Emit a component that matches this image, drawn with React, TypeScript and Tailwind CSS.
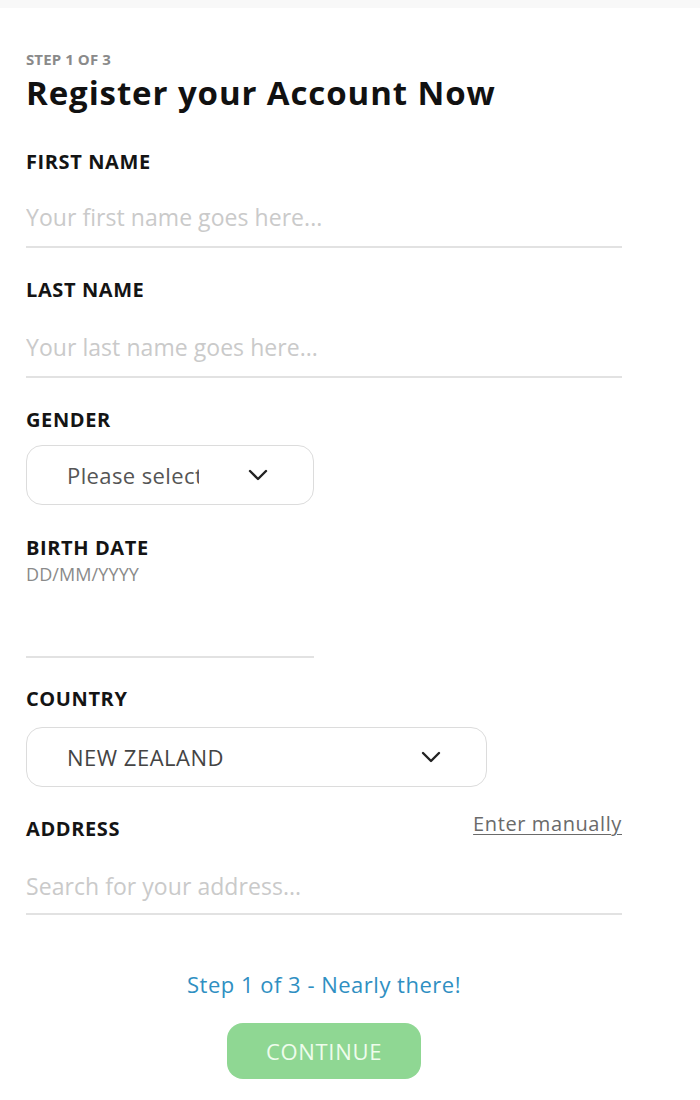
import React from "react";

const font = { fontFamily: '"Open Sans", "Noto Sans", sans-serif' };

function Chevron() {
  return (
    <svg width="20" height="12" viewBox="0 0 20 12" fill="none" className="shrink-0">
      <polyline points="2,2 10,10 18,2" stroke="#222" strokeWidth="2.4" strokeLinecap="round" strokeLinejoin="round" />
    </svg>
  );
}

function Label({ children }: { children: React.ReactNode }) {
  return <div className="text-[20px] leading-[28px] font-bold text-[#141414] tracking-[0.6px]">{children}</div>;
}

function TextInput({ placeholder, pb = "pb-[14px]" }: { placeholder: string; pb?: string }) {
  return (
    <div className={`mt-[28px] ${pb} border-b-2 border-[#e2e2e2]`}>
      <input
        className="block w-full h-[30px] text-[23px] leading-[30px] outline-none bg-transparent placeholder:text-[#cacaca] text-[#333] tracking-[0.05px]"
        placeholder={placeholder}
        style={font}
      />
    </div>
  );
}

export default function App() {
  return (
    <div className="w-[700px] min-h-[1100px] bg-white" style={font}>
      <div className="h-[8px] bg-[#f8f8f8]" />
      <div className="ml-[26px] w-[596px] pt-[41px] pb-[21px]">
        <div className="text-[15px] leading-[20px] font-bold text-[#8a8a8a] tracking-[0.1px]">STEP 1 OF 3</div>
        <h1 className="mt-[4px] text-[33px] leading-[40px] font-bold text-[#111] tracking-[0.9px]">Register your Account Now</h1>

        <div className="mt-[35px]">
          <Label>FIRST NAME</Label>
          <div className="-mt-[2px]">
            <TextInput placeholder="Your first name goes here..." />
          </div>
        </div>

        <div className="mt-[28px]">
          <Label>LAST NAME</Label>
          <TextInput placeholder="Your last name goes here..." />
        </div>

        <div className="mt-[28px]">
          <Label>GENDER</Label>
          <div className="mt-[11px] w-[288px] h-[60px] rounded-[16px] border border-[#dcdcdc] flex items-center pl-[40px] pr-[45px] justify-between">
            <span className="block w-[132px] overflow-hidden whitespace-nowrap text-[22px] leading-[30px] text-[#555] tracking-[0.4px]">Please select</span>
            <Chevron />
          </div>
        </div>

        <div className="mt-[29px]">
          <Label>BIRTH DATE</Label>
          <div className="text-[18px] leading-[24px] text-[#8a8a8a] tracking-[0.1px]">DD/MM/YYYY</div>
          <div className="w-[288px] h-[72px] border-b-2 border-[#e2e2e2]" />
        </div>

        <div className="mt-[27px]">
          <Label>COUNTRY</Label>
          <div className="mt-[14px] w-[461px] h-[60px] rounded-[16px] border border-[#dcdcdc] flex items-center pl-[40px] pr-[45px] justify-between">
            <span className="text-[22px] leading-[30px] text-[#444] tracking-[0.5px]">NEW ZEALAND</span>
            <Chevron />
          </div>
        </div>

        <div className="mt-[28px]">
          <div className="flex justify-between items-start">
            <Label>ADDRESS</Label>
            <a href="#" className="-mt-[5px] text-[20px] leading-[28px] text-[#6a6a6a] underline underline-offset-[3px] decoration-1 tracking-[0.6px]">Enter manually</a>
          </div>
          <TextInput placeholder="Search for your address..." pb="pb-[12px]" />
        </div>

        <div className="mt-[54px] text-center text-[22px] leading-[30px] text-[#2f8fc2] tracking-[0.5px]">Step 1 of 3 - Nearly there!</div>
        <div className="mt-[24px] flex justify-center">
          <button className="w-[194px] h-[56px] rounded-[16px] bg-[#8fd793] text-[#eefcec] text-[22px] leading-[30px] tracking-[0.7px]" style={font}>CONTINUE</button>
        </div>
      </div>
    </div>
  );
}
